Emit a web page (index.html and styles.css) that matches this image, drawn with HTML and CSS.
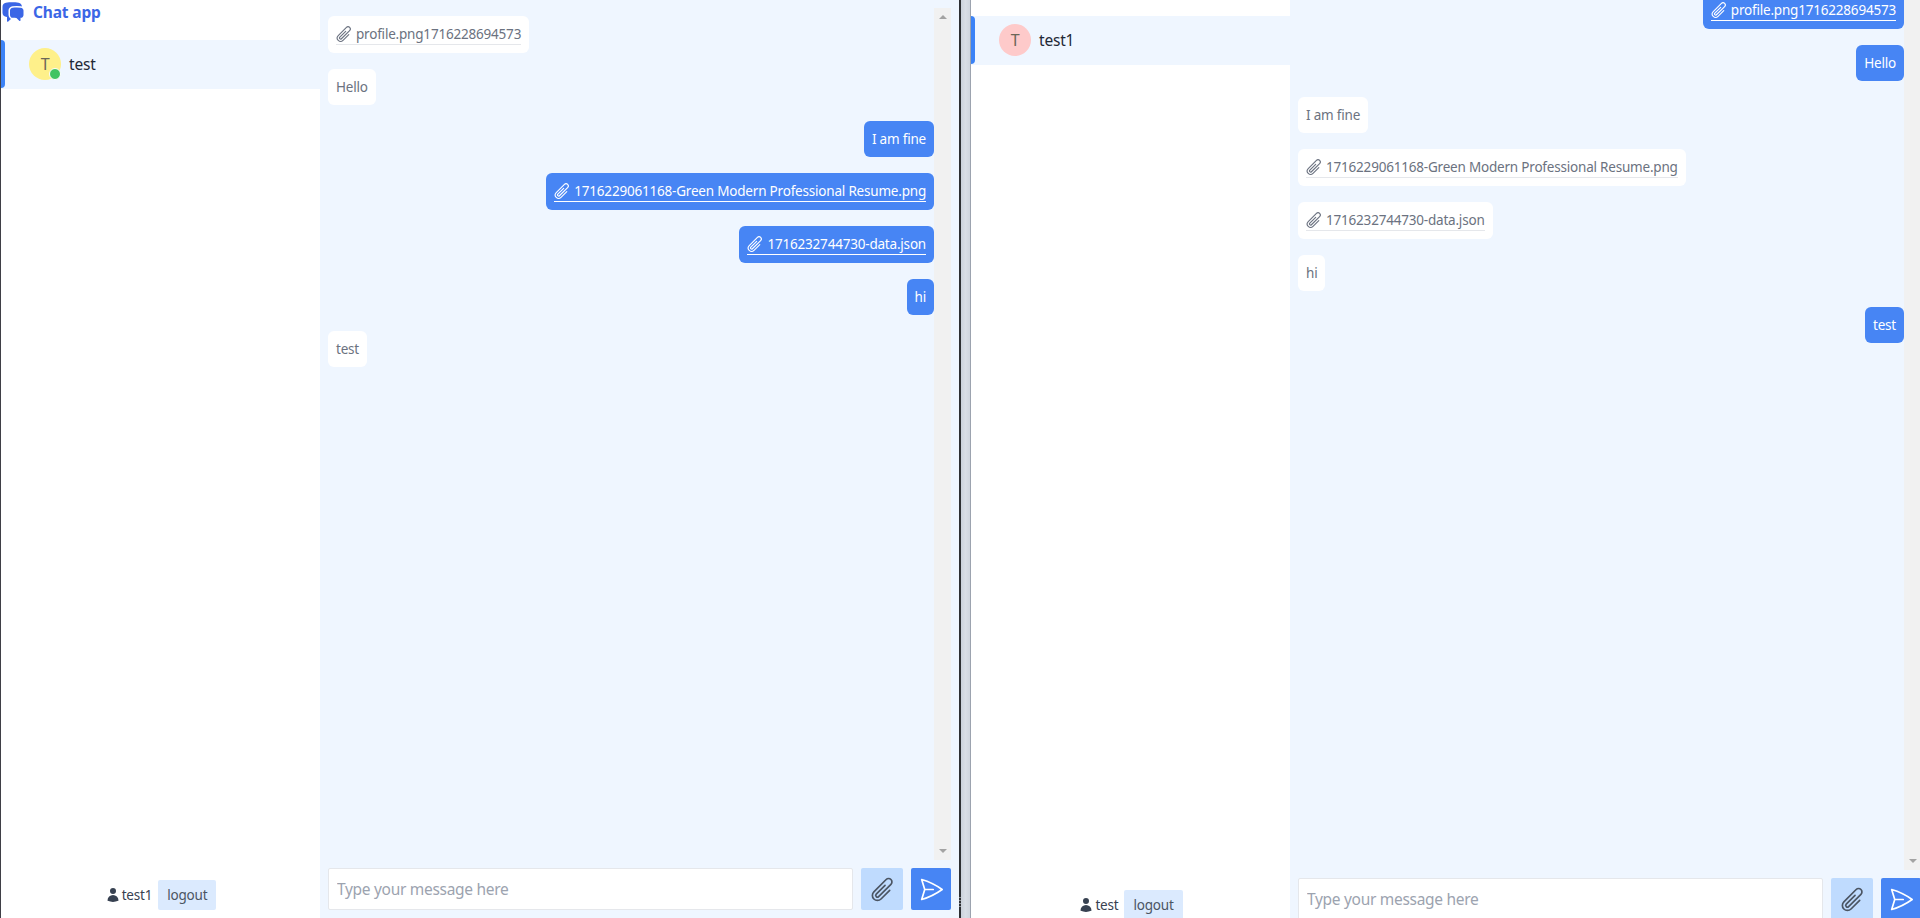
FILE: index.html
```html
<!DOCTYPE html>
<html lang="en">
<head>
<meta charset="utf-8">
<title>Chat app</title>
<link rel="stylesheet" href="styles.css">
</head>
<body>
<svg class="defs" aria-hidden="true">
  <symbol id="clip" viewBox="0 0 24 24"><path fill="none" stroke="currentColor" stroke-width="1.5" stroke-linecap="round" stroke-linejoin="round" d="M18.375 12.739l-7.693 7.693a4.5 4.5 0 01-6.364-6.364l10.94-10.94A3 3 0 1119.5 7.372L8.552 18.32m.009-.01l-.01.01m5.699-9.941l-7.81 7.81a1.5 1.5 0 002.112 2.13"/></symbol>
  <symbol id="send" viewBox="0 0 24 24"><path fill="none" stroke="currentColor" stroke-width="1.5" stroke-linecap="round" stroke-linejoin="round" d="M6 12L3.269 3.126A59.768 59.768 0 0121.485 12 59.77 59.77 0 013.27 20.876L5.999 12zm0 0h7.5"/></symbol>
  <symbol id="user" viewBox="0 0 24 24"><path fill="currentColor" d="M7.5 6a4.5 4.5 0 119 0 4.5 4.5 0 01-9 0zM3.751 20.105a8.25 8.25 0 0116.498 0 .75.75 0 01-.437.695A18.683 18.683 0 0112 22.5c-2.786 0-5.433-.608-7.812-1.7a.75.75 0 01-.437-.695z"/></symbol>
  <symbol id="chat" viewBox="0 0 24 24"><path fill="currentColor" d="M4.913 2.658c2.075-.27 4.19-.408 6.337-.408 2.147 0 4.262.139 6.337.408 1.922.25 3.291 1.861 3.405 3.727a4.403 4.403 0 00-1.032-.211 50.89 50.89 0 00-8.42 0c-2.358.196-4.04 2.19-4.04 4.434v4.286a4.47 4.47 0 002.433 3.984L7.28 21.53A.75.75 0 016 21v-4.03a48.527 48.527 0 01-1.087-.128C2.905 16.58 1.5 14.833 1.5 12.862V6.638c0-1.97 1.405-3.718 3.413-3.979z"/><path fill="currentColor" d="M15.75 7.5c-1.376 0-2.739.057-4.086.169C10.124 7.797 9 9.103 9 10.609v4.285c0 1.507 1.128 2.814 2.67 2.94 1.243.102 2.5.157 3.768.165l2.782 2.781a.75.75 0 001.28-.53v-2.39l.33-.026c1.542-.125 2.67-1.433 2.67-2.94v-4.286c0-1.505-1.125-2.811-2.664-2.94A49.392 49.392 0 0015.75 7.5z"/></symbol>
</svg>

<section class="pane pane-first">
  <aside class="sidebar">
    <div class="brand"><svg class="brand-icon"><use href="#chat"/></svg><span>Chat app</span></div>
    <div class="contact">
      <div class="avatar avatar-yellow">T<span class="online"></span></div>
      <span class="contact-name">test</span>
    </div>
    <div class="account">
      <span class="account-name"><svg class="user-icon"><use href="#user"/></svg>test1</span>
      <button class="logout">logout</button>
    </div>
  </aside>
  <main class="chat">
    <div class="thread">
      <div class="messages">
        <div class="row"><div class="bubble in"><a class="file"><svg class="clip"><use href="#clip"/></svg>profile.png1716228694573</a></div></div>
        <div class="row"><div class="bubble in">Hello</div></div>
        <div class="row out"><div class="bubble sent">I am fine</div></div>
        <div class="row out"><div class="bubble sent"><a class="file"><svg class="clip"><use href="#clip"/></svg>1716229061168-Green Modern Professional Resume.png</a></div></div>
        <div class="row out"><div class="bubble sent"><a class="file"><svg class="clip"><use href="#clip"/></svg>1716232744730-data.json</a></div></div>
        <div class="row out"><div class="bubble sent">hi</div></div>
        <div class="row"><div class="bubble in">test</div></div>
      </div>
      <div class="scrollbar"><span class="arrow-up"></span><span class="arrow-down"></span></div>
    </div>
    <form class="composer">
      <input class="message-input" type="text" placeholder="Type your message here">
      <button class="attach" type="button"><svg class="btn-icon"><use href="#clip"/></svg></button>
      <button class="send" type="button"><svg class="btn-icon"><use href="#send"/></svg></button>
    </form>
  </main>
</section>

<div class="splitter"><span class="grip"></span></div>

<section class="pane pane-second">
  <aside class="sidebar">
    <div class="brand"><svg class="brand-icon"><use href="#chat"/></svg><span>Chat app</span></div>
    <div class="contact">
      <div class="avatar avatar-pink">T</div>
      <span class="contact-name">test1</span>
    </div>
    <div class="account">
      <span class="account-name"><svg class="user-icon"><use href="#user"/></svg>test</span>
      <button class="logout">logout</button>
    </div>
  </aside>
  <main class="chat">
    <div class="thread">
      <div class="messages">
        <div class="row out"><div class="bubble sent"><a class="file"><svg class="clip"><use href="#clip"/></svg>profile.png1716228694573</a></div></div>
        <div class="row out"><div class="bubble sent">Hello</div></div>
        <div class="row"><div class="bubble in">I am fine</div></div>
        <div class="row"><div class="bubble in"><a class="file"><svg class="clip"><use href="#clip"/></svg>1716229061168-Green Modern Professional Resume.png</a></div></div>
        <div class="row"><div class="bubble in"><a class="file"><svg class="clip"><use href="#clip"/></svg>1716232744730-data.json</a></div></div>
        <div class="row"><div class="bubble in">hi</div></div>
        <div class="row out"><div class="bubble sent">test</div></div>
      </div>
      <div class="scrollbar"><span class="arrow-up"></span><span class="arrow-down"></span></div>
    </div>
    <form class="composer">
      <input class="message-input" type="text" placeholder="Type your message here">
      <button class="attach" type="button"><svg class="btn-icon"><use href="#clip"/></svg></button>
      <button class="send" type="button"><svg class="btn-icon"><use href="#send"/></svg></button>
    </form>
  </main>
</section>
</body>
</html>
```
FILE: styles.css
```css
* { box-sizing: border-box; }
html, body { margin: 0; height: 918px; overflow: hidden; }
body {
  display: flex;
  align-items: flex-start;
  width: 1920px;
  background: #fff;
  font-family: "Noto Sans", "Open Sans", sans-serif;
  font-size: 13.5px;
  letter-spacing: -0.2px;
  color: #4b5563;
}
.defs { display: none; }

.pane { display: flex; flex: none; }
.pane-first { height: 918px; border-left: 1px solid #3f3f46; border-right: 2px solid #2d2f33; }
.pane-second { height: 952px; margin-top: -24px; }

.splitter {
  position: relative;
  flex: none;
  width: 10px;
  height: 918px;
  background: linear-gradient(90deg, #cbd2dc, #d9dee6 50%, #cfd5de);
  border-right: 1px solid #9ca3af;
}
.grip {
  position: absolute;
  left: -2px;
  bottom: 9px;
  width: 2px;
  height: 12px;
  background: repeating-linear-gradient(180deg, #8d9096 0 1px, #2d2f33 1px 3px);
}

.sidebar { flex: none; width: 319px; display: flex; flex-direction: column; background: #fff; }
.brand { display: flex; align-items: center; height: 40px; padding-bottom: 16px; gap: 8px; color: #3b66e6; font-size: 15.5px; font-weight: 700; letter-spacing: -0.15px; }
.brand-icon { width: 24px; height: 24px; flex: none; }
.contact { position: relative; display: flex; align-items: center; gap: 8px; height: 49px; padding: 0 0 1px 28px; background: #eff6ff; color: #1f2937; font-size: 15.5px; letter-spacing: -0.2px; }
.contact::before { content: ""; position: absolute; left: 0; top: 0; bottom: 1px; width: 4px; background: #3b82f6; border-radius: 0 4px 4px 0; }
.avatar { position: relative; width: 32px; height: 32px; border-radius: 50%; display: flex; align-items: center; justify-content: center; font-size: 16px; color: #6b6658; }
.avatar-yellow { background: #fef08a; }
.avatar-pink { background: #fecaca; }
.online { position: absolute; right: 0; bottom: 0; width: 12px; height: 12px; border-radius: 50%; background: #40c463; border: 1px solid #fff; }
.account { margin-top: auto; display: flex; align-items: center; justify-content: center; gap: 6px; padding-bottom: 8px; color: #374151; }
.account-name { display: flex; align-items: center; gap: 1px; }
.user-icon { width: 16px; height: 16px; flex: none; color: #374151; }
.logout { height: 30px; padding: 0 9px; border: 0; border-radius: 2px; background: #dbeafe; color: #4b5563; font: inherit; letter-spacing: inherit; }

.chat { flex: none; width: 639px; display: flex; flex-direction: column; background: #eff6ff; }
.thread { flex: 1; min-height: 0; display: flex; padding: 8px 8px 0 0; }
.messages { flex: 1; min-width: 0; display: flex; flex-direction: column; gap: 16px; padding: 8px 0 0 8px; }
.row { display: flex; }
.row.out { justify-content: flex-end; }
.bubble { padding: 8px; border-radius: 6px; line-height: 20px; }
.bubble.in { background: #fff; color: #6b7280; }
.bubble.sent { background: #4785f4; color: #fff; }
.file { display: flex; align-items: center; gap: 3px; height: 21px; white-space: nowrap; border-bottom: 1px solid #e5e7eb; }
.bubble.sent .file { border-bottom-color: #fff; }
.clip { width: 18px; height: 18px; flex: none; margin-left: -1px; }

.scrollbar { flex: none; width: 17px; display: flex; flex-direction: column; justify-content: space-between; align-items: center; padding: 7px 0; background: #f1f1f1; }
.arrow-up { border: 4px solid transparent; border-top: 0; border-bottom-color: #a3a3a3; }
.arrow-down { border: 4px solid transparent; border-bottom: 0; border-top-color: #a3a3a3; }

.composer { flex: none; display: flex; gap: 8px; padding: 8px; height: 58px; }
.message-input { flex: 1; min-width: 0; height: 42px; padding: 0 8px; border: 1px solid #e5e7eb; border-radius: 2px; background: #fff; color: #374151; font: 15.5px "Noto Sans", sans-serif; letter-spacing: -0.3px; outline: none; }
.message-input::placeholder { color: #9ca3af; }
.attach, .send { flex: none; display: flex; align-items: center; justify-content: center; height: 42px; border: 0; border-radius: 2px; padding: 0; }
.attach { width: 42px; background: #bfdbfe; color: #4b5563; }
.send { width: 40px; background: #4785f4; color: #fff; }
.btn-icon { width: 27px; height: 27px; }
```
